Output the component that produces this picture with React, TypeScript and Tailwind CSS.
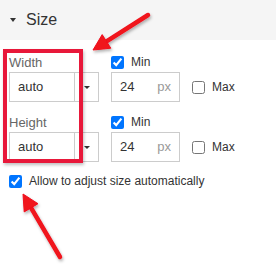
import React from "react";

const Field = ({ label }: { label: string }) => {
  return (
    <div className="flex flex-col">
      <div className="grid grid-cols-[90px_69px_auto] gap-x-[12px] h-[15px] items-center">
        <span className="text-[13px] leading-[15px] text-[#666]">{label}</span>
        <label className="flex items-center gap-[7px]">
          <input type="checkbox" checked readOnly className="m-0 w-[13px] h-[13px] accent-[#0075ff]" />
          <span className="text-[12px] leading-[15px] text-[#333]">Min</span>
        </label>
        <span />
      </div>
      <div className="grid grid-cols-[90px_69px_auto] gap-x-[12px] mt-[2px] h-[30px]">
        <div className="flex h-full">
          <div className="flex-1 border border-[#ccc] flex items-center pl-[8px] text-[13px] text-[#333]">
            auto
          </div>
          <div className="w-[24px] border border-l-0 border-[#ccc] flex items-center justify-center">
            <span className="w-0 h-0 border-l-[3px] border-r-[3px] border-t-[3px] border-l-transparent border-r-transparent border-t-[#333]" />
          </div>
        </div>
        <div className="border border-[#ccc] flex items-center justify-between pl-[8px] pr-[8px] text-[13px]">
          <span className="text-[#333]">24</span>
          <span className="text-[#999]">px</span>
        </div>
        <label className="flex items-center gap-[7px]">
          <input type="checkbox" readOnly className="m-0 w-[13px] h-[13px]" />
          <span className="text-[12px] text-[#333]">Max</span>
        </label>
      </div>
    </div>
  );
};

export default function App() {
  return (
    <div className="relative w-[276px] h-[275px] bg-white overflow-hidden font-['Liberation_Sans',_Arial,_sans-serif]">
      <div className="h-[40px] bg-[#f5f5f5] flex items-center pl-[10px]">
        <span className="w-0 h-0 border-l-[3px] border-r-[3px] border-t-[4px] border-l-transparent border-r-transparent border-t-[#333]" />
        <span className="ml-[10px] text-[16px] text-[#333]">Size</span>
      </div>

      <div className="px-[9px] pt-[15px] flex flex-col gap-[13px]">
        <Field label="Width" />
        <Field label="Height" />
        <label className="flex items-center gap-[7px] h-[13px]">
          <input type="checkbox" checked readOnly className="m-0 w-[13px] h-[13px] accent-[#0075ff]" />
          <span className="text-[12px] leading-[13px] text-[#333]">Allow to adjust size automatically</span>
        </label>
      </div>

      {/* highlight box */}
      <div className="absolute left-[3px] top-[49px] w-[80px] h-[114px] border-[4px] border-[#e8183a] shadow-[1px_2px_3px_rgba(0,0,0,0.25)]" />

      {/* arrows */}
      <svg className="absolute left-0 top-0" width="276" height="275" viewBox="0 0 276 275">
        <defs>
          <filter id="sh" x="-20%" y="-20%" width="140%" height="140%">
            <feDropShadow dx="1" dy="2" stdDeviation="1.5" floodColor="#000" floodOpacity="0.3" />
          </filter>
        </defs>
        <g filter="url(#sh)" fill="#f0121e" stroke="#f0121e">
          <line x1="148" y1="15" x2="106.5" y2="41.4" strokeWidth="4.5" strokeLinecap="round" />
          <polygon points="93,50 110.8,48.2 102.2,34.6" strokeWidth="1" strokeLinejoin="round" />
          <line x1="60" y1="257" x2="31.1" y2="207.8" strokeWidth="4.5" strokeLinecap="round" />
          <polygon points="23,194 38,203.7 24.2,211.9" strokeWidth="1" strokeLinejoin="round" />
        </g>
      </svg>
    </div>
  );
}
